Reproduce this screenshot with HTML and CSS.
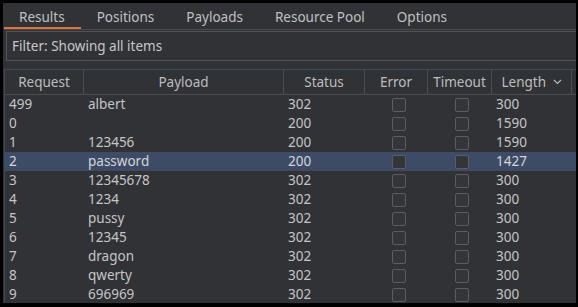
FILE: index.html
```html
<!DOCTYPE html>
<html lang="en">
<head>
    <meta charset="UTF-8">
    <title>Intruder Results</title>
    <link rel="stylesheet" href="styles.css">
</head>
<body>

<div class="frame">
    <!-- Tabs -->
    <div class="tabs">
        <div class="tab active">Results</div>
        <div class="tab">Positions</div>
        <div class="tab">Payloads</div>
        <div class="tab">Resource Pool</div>
        <div class="tab">Options</div>
    </div>

    <!-- Filter -->
    <div class="filter">Filter: Showing all items</div>

    <!-- Results table -->
    <div class="results">
        <div class="row head">
            <div class="cell">Request</div>
            <div class="cell">Payload</div>
            <div class="cell">Status</div>
            <div class="cell">Error</div>
            <div class="cell">Timeout</div>
            <div class="cell">Length
                <svg class="sort" width="9" height="6" viewBox="0 0 9 6"><path d="M1 1 L4.5 4.5 L8 1" fill="none" stroke="#b8b9bb" stroke-width="1.1"/></svg>
            </div>
            <div class="cell"></div>
        </div>
        <div id="rows"></div>
    </div>
</div>

<script>
    var data = [
        [499, "albert", 302, 300],
        [0, "", 200, 1590],
        [1, "123456", 200, 1590],
        [2, "password", 200, 1427],
        [3, "12345678", 302, 300],
        [4, "1234", 302, 300],
        [5, "pussy", 302, 300],
        [6, "12345", 302, 300],
        [7, "dragon", 302, 300],
        [8, "qwerty", 302, 300],
        [9, "696969", 302, 300]
    ];

    var rows = document.getElementById("rows");
    data.forEach(function (d) {
        var row = document.createElement("div");
        row.className = "row" + (d[0] === 2 ? " selected" : "");
        row.innerHTML = `
            <div class="cell req">${d[0]}</div>
            <div class="cell">${d[1]}</div>
            <div class="cell">${d[2]}</div>
            <div class="cell check"><span class="box"></span></div>
            <div class="cell check"><span class="box"></span></div>
            <div class="cell">${d[3]}</div>
            <div class="cell"></div>
        `;
        rows.appendChild(row);
    });
</script>

</body>
</html>
```

FILE: styles.css
```css
* { margin: 0; padding: 0; box-sizing: border-box; }
html, body { width: 578px; height: 307px; overflow: hidden; background: #000; }
body { font-family: "Noto Sans", "Open Sans", sans-serif; font-size: 13.5px; color: #c4c5c7; }

.frame { margin: 3px 2px 0 3px; width: 573px; height: 300px; background: #313235; padding-left: 1px; display: flex; flex-direction: column; overflow: hidden; }

.tabs { display: flex; height: 27px; border-bottom: 1px solid #4b4c4f; }
.tab { padding: 4px 16px 0 15px; line-height: 20px; color: #bfc0c2; border-bottom: 2px solid transparent; }
.tab.active { border-bottom-color: #e0703a; }
.tab + .tab { margin-left: 1px; }

.filter { margin: 1px 0 0 2px; height: 30px; border: 1px solid #535457; border-right: none; padding: 0 0 0 5px; line-height: 28px; color: #c6c7c9; }

.results { margin-top: 8px; border-top: 1px solid #3c4a60; border-left: 1px solid #3c4a60; flex: 1; overflow: hidden; }

.row { display: grid; grid-template-columns: 79px 200px 81px 63px 64px 80px 5px; height: 19px; line-height: 19px; }
.row .cell { padding-left: 4px; white-space: nowrap; overflow: hidden; }
.row.selected { background: #3e4b66; color: #d4d5d8; }

.head { height: 25px; line-height: 24px; border-bottom: 1px solid #4d4e51; }
.head .cell { padding-left: 0; text-align: center; border-right: 1px solid #4d4e51; color: #bcbdbf; }
.head .cell:last-child { border-right: none; }
.sort { margin-left: 3px; vertical-align: 2px; }

.check { display: flex; align-items: center; justify-content: center; }
.box { width: 14px; height: 14px; border: 1px solid #5c5d60; border-radius: 2px; background: #343538; }
.selected .box { background: #333539; border-color: #5a5d63; }
```
